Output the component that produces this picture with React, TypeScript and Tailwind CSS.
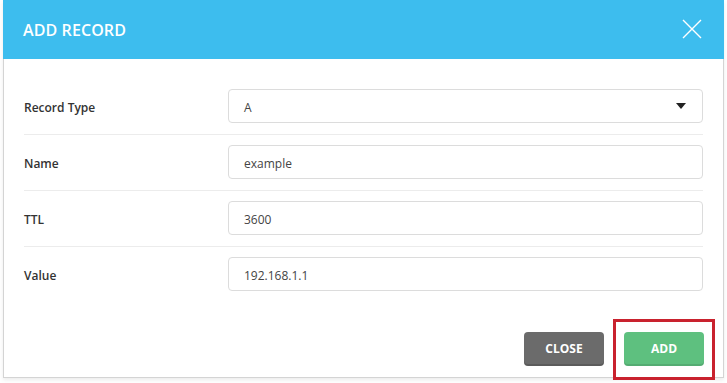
const rows = [
  { label: 'Record Type', value: 'A', select: true },
  { label: 'Name', value: 'example' },
  { label: 'TTL', value: '3600' },
  { label: 'Value', value: '192.168.1.1', last: true },
];

export default function App() {
  return (
    <div className="w-[727px] h-[383px] bg-white font-['Open_Sans',sans-serif] pl-[3px] pr-[3px] overflow-hidden">
      <div className="w-[721px] h-[378px] bg-white border-x border-b border-[#d4d4d4] shadow-[0_2px_4px_rgba(0,0,0,0.08)] flex flex-col">
        <div className="h-[59px] -mx-px bg-[#3dbdee] flex items-center justify-between pl-[20px] pr-[22px]">
          <h2 className="text-white text-[16px] font-semibold tracking-[0.1px]">ADD RECORD</h2>
          <svg width="20" height="20" viewBox="0 0 20 20" className="mt-[-1px]">
            <path d="M1 1 L19 19 M19 1 L1 19" stroke="#ffffff" strokeWidth="1.4" fill="none" />
          </svg>
        </div>

        <div className="px-[20px] pt-[20px]">
          {rows.map((r) => (
            <div
              key={r.label}
              className={`flex items-center pt-[10px] ${r.last ? 'pb-[10px]' : 'pb-[11px] border-b border-[#ececec]'}`}
            >
              <div className="w-[204px] pt-[3px] text-[12px] font-semibold text-[#333]">{r.label}</div>
              <div className="flex-1 h-[34px] border border-[#dcdcdc] rounded-[4px] flex items-center justify-between pl-[15px] pr-[16px] text-[12px] text-[#444]">
                <span className="pt-[3px]">{r.value}</span>
                {r.select && (
                  <svg width="10" height="6" viewBox="0 0 10 6">
                    <path d="M0 0 L10 0 L5 6 Z" fill="#222" />
                  </svg>
                )}
              </div>
            </div>
          ))}
        </div>

        <div className="flex justify-end gap-[20px] pr-[19px] mt-[31px]">
          <button className="w-[80px] h-[34px] rounded-[4px] bg-[#6b6b6b] shadow-[inset_0_-2px_0_rgba(0,0,0,0.15)] text-white text-[12px] font-bold">
            CLOSE
          </button>
          <div className="relative">
            <button className="w-[80px] h-[34px] rounded-[4px] bg-[#5ec07f] shadow-[inset_0_-2px_0_rgba(0,0,0,0.1)] text-white text-[12px] font-bold">
              ADD
            </button>
            <div className="absolute left-[-11px] top-[-13px] w-[102px] h-[61px] border-[3px] border-[#c9222e]" />
          </div>
        </div>
      </div>
    </div>
  );
}
